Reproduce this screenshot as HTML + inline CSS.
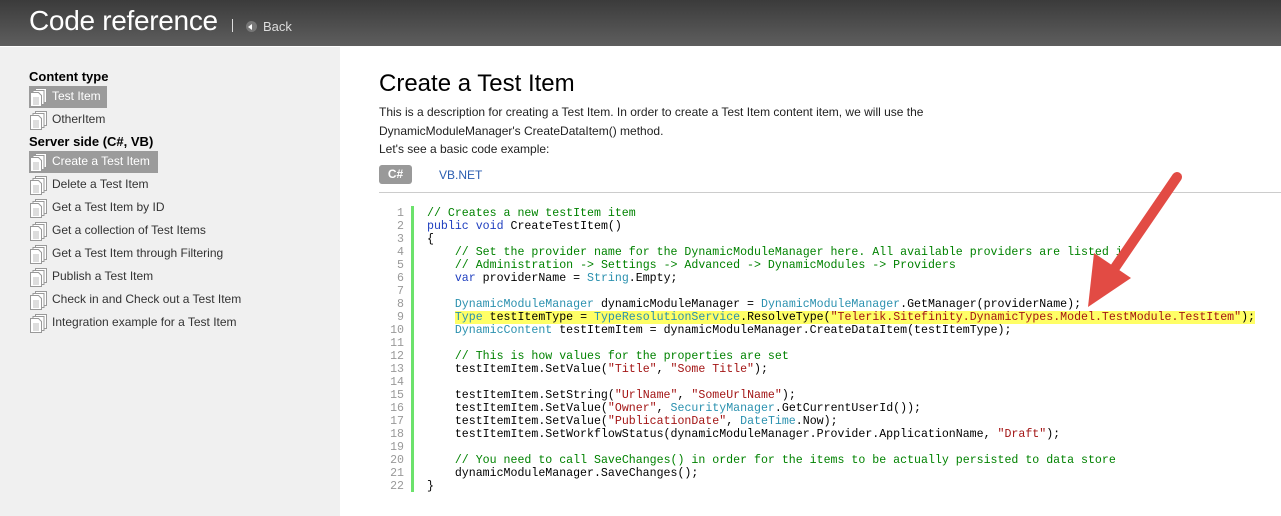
<!DOCTYPE html>
<html><head><meta charset="utf-8"><style>
*{margin:0;padding:0;box-sizing:border-box}
body{width:1281px;height:516px;overflow:hidden;background:#fff;font-family:"Liberation Sans",Arial,sans-serif;position:relative}
.hdr{position:absolute;left:0;top:0;width:1281px;height:46px;background:linear-gradient(#3b3b3b,#5e5e5e)}
.hdr h1{position:absolute;left:29px;top:5px;font-weight:normal;font-size:28px;color:#fff;letter-spacing:-0.3px}
.sep{position:absolute;left:232px;top:19px;width:1px;height:13px;background:#ddd}
.back{position:absolute;left:246px;top:19px;font-size:13px;color:#ddd}
.back i{display:inline-block;width:11px;height:11px;border-radius:50%;background:#777;vertical-align:-1px;margin-right:6px;position:relative}
.back i:after{content:"";position:absolute;left:2px;top:3px;border:3px solid transparent;border-right:4px solid #fff;border-left:0;}
.side{position:absolute;left:0;top:47px;width:340px;height:469px;background:#f0f0f0}
.h{position:absolute;left:29px;font-size:13px;font-weight:bold;color:#000}
.it{position:absolute;left:29px;height:22px;font-size:12px;color:#333;padding:3px 5px 0 23px;white-space:nowrap}
.it.sel{background:#9b9b9b;color:#fff}
.it svg{position:absolute;left:1px;top:2px}
h2{position:absolute;left:379px;top:70px;font-weight:normal;font-size:24px;color:#000}
.desc{position:absolute;left:379px;top:103px;font-size:12px;color:#222;line-height:18.5px}
.tab{position:absolute;left:379px;top:165px;width:33px;height:19px;background:#999;border-radius:3px;color:#fff;font-weight:bold;font-size:12px;text-align:center;line-height:19px}
.vb{position:absolute;left:439px;top:168px;font-size:12px;color:#2a5db0}
.rule{position:absolute;left:379px;top:192px;width:902px;height:1px;background:#ccc}
.ln{position:absolute;left:380px;top:207px;width:24px;text-align:right;font-family:"Liberation Mono",monospace;font-size:11.6px;line-height:13px;color:#999}
.bar{position:absolute;left:411px;top:206px;width:3px;height:286px;background:#6ce26c}
pre{position:absolute;left:427px;top:207px;font-family:"Liberation Mono",monospace;font-size:11.6px;line-height:13px;color:#000}
.c{color:#008200}.k{color:#1f3fbf}.t{color:#2b91af}.s{color:#a31515}
.hl{background:#ffff66}
</style></head><body>
<div class="hdr"><h1>Code reference</h1><div class="sep"></div><div class="back"><i></i>Back</div></div>
<div class="side"></div>
<div class="h" style="top:69px">Content type</div>
<div class="h" style="top:134px">Server side (C#, VB)</div>
<svg width="0" height="0" style="position:absolute"><defs><g id="doc"><rect x="5.5" y="0.5" width="11" height="14" fill="#fff" stroke="#999"/><rect x="3" y="2.5" width="11" height="14" fill="#fff" stroke="#999"/><path d="M0.5 4.5h8l3 3v11h-11z" fill="#fff" stroke="#999"/><path d="M3 10h6M3 12h6M3 14h6M3 16h6" stroke="#bbb"/></g></defs></svg>
<div class="it sel" style="top:86px;width:78px"><svg width="18" height="20"><use href="#doc"/></svg>Test Item</div>
<div class="it" style="top:109px"><svg width="18" height="20"><use href="#doc"/></svg>OtherItem</div>
<div class="it sel" style="top:151px;width:129px"><svg width="18" height="20"><use href="#doc"/></svg>Create a Test Item</div>
<div class="it" style="top:174px"><svg width="18" height="20"><use href="#doc"/></svg>Delete a Test Item</div>
<div class="it" style="top:197px"><svg width="18" height="20"><use href="#doc"/></svg>Get a Test Item by ID</div>
<div class="it" style="top:220px"><svg width="18" height="20"><use href="#doc"/></svg>Get a collection of Test Items</div>
<div class="it" style="top:243px"><svg width="18" height="20"><use href="#doc"/></svg>Get a Test Item through Filtering</div>
<div class="it" style="top:266px"><svg width="18" height="20"><use href="#doc"/></svg>Publish a Test Item</div>
<div class="it" style="top:289px"><svg width="18" height="20"><use href="#doc"/></svg>Check in and Check out a Test Item</div>
<div class="it" style="top:312px"><svg width="18" height="20"><use href="#doc"/></svg>Integration example for a Test Item</div>
<h2>Create a Test Item</h2>
<div class="desc">This is a description for creating a Test Item. In order to create a Test Item content item, we will use the<br>DynamicModuleManager's CreateDataItem() method.<br>Let's see a basic code example:</div>
<div class="tab">C#</div><div class="vb">VB.NET</div>
<div class="rule"></div>
<div class="ln">1<br>2<br>3<br>4<br>5<br>6<br>7<br>8<br>9<br>10<br>11<br>12<br>13<br>14<br>15<br>16<br>17<br>18<br>19<br>20<br>21<br>22</div>
<div class="bar"></div>
<pre><span class="c">// Creates a new testItem item</span>
<span class="k">public</span> <span class="k">void</span> CreateTestItem()
{
    <span class="c">// Set the provider name for the DynamicModuleManager here. All available providers are listed in</span>
    <span class="c">// Administration -&gt; Settings -&gt; Advanced -&gt; DynamicModules -&gt; Providers</span>
    <span class="k">var</span> providerName = <span class="t">String</span>.Empty;

    <span class="t">DynamicModuleManager</span> dynamicModuleManager = <span class="t">DynamicModuleManager</span>.GetManager(providerName);
    <span class="hl"><span class="t">Type</span> testItemType = <span class="t">TypeResolutionService</span>.ResolveType(<span class="s">"Telerik.Sitefinity.DynamicTypes.Model.TestModule.TestItem"</span>);</span>
    <span class="t">DynamicContent</span> testItemItem = dynamicModuleManager.CreateDataItem(testItemType);

    <span class="c">// This is how values for the properties are set</span>
    testItemItem.SetValue(<span class="s">"Title"</span>, <span class="s">"Some Title"</span>);

    testItemItem.SetString(<span class="s">"UrlName"</span>, <span class="s">"SomeUrlName"</span>);
    testItemItem.SetValue(<span class="s">"Owner"</span>, <span class="t">SecurityManager</span>.GetCurrentUserId());
    testItemItem.SetValue(<span class="s">"PublicationDate"</span>, <span class="t">DateTime</span>.Now);
    testItemItem.SetWorkflowStatus(dynamicModuleManager.Provider.ApplicationName, <span class="s">"Draft"</span>);

    <span class="c">// You need to call SaveChanges() in order for the items to be actually persisted to data store</span>
    dynamicModuleManager.SaveChanges();
}</pre>
<svg style="position:absolute;left:0;top:0" width="1281" height="516">
<line x1="1177" y1="177" x2="1110" y2="275" stroke="#e24b44" stroke-width="10" stroke-linecap="round"/>
<polygon points="1088,307 1094,253 1131,278" fill="#e24b44"/>
</svg>
</body></html>
